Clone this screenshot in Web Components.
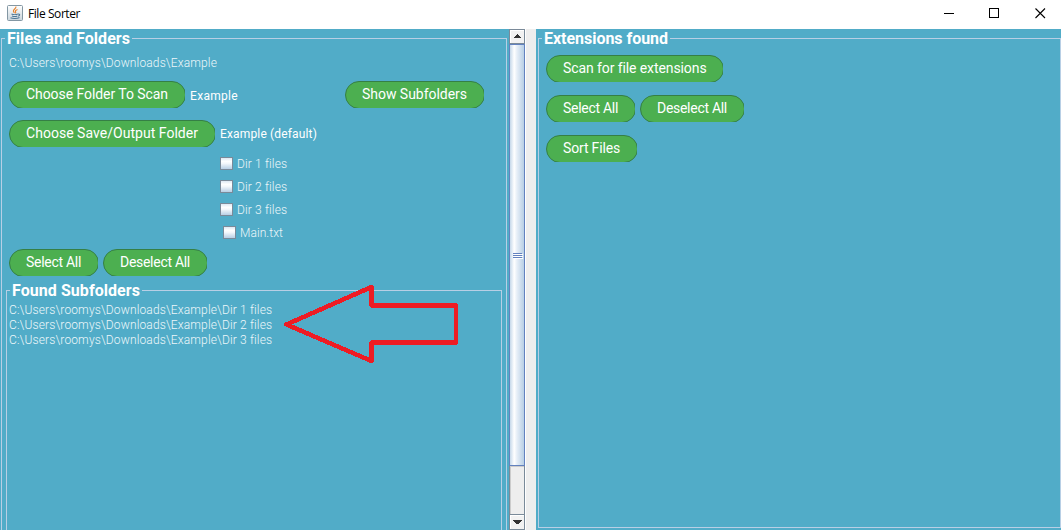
<!DOCTYPE html>
<html lang="en"><head><meta charset="utf-8"><title>File Sorter</title>
<style>html,body{margin:0;height:530px;overflow:hidden;background:#eee;font-family:Roboto,"Liberation Sans",sans-serif}</style></head>
<body><sorter-window></sorter-window>
<script>
function define(name, html, ready) {
  const t = document.createElement('template');
  t.innerHTML = html;
  customElements.define(name, class extends HTMLElement {
    constructor() { super(); this.attachShadow({mode: 'open'}).append(t.content.cloneNode(true)); }
    connectedCallback() { if (ready) ready(this); }
  });
}

/* Text tracked out or in to a fixed advance width */
define('fit-text', `<style>:host{display:inline-block;white-space:pre}span{display:inline-block}</style><span><slot></slot></span>`, el => {
  const w = +el.getAttribute('w'), s = el.shadowRoot.querySelector('span');
  requestAnimationFrame(() => {
    const now = s.getBoundingClientRect().width;
    s.style.letterSpacing = (w - now) / el.textContent.length + 'px';
    el.style.width = w + 'px';
  });
});

define('pill-button', `<style>
:host{display:block;height:27px;overflow:hidden;flex:none;color:#fff;font-size:14px;line-height:24px}
div{box-sizing:border-box;height:28px;margin-right:-1px;padding:0 17px 0 16px;border:1px solid #357f45;border-radius:14px;background:#4caf50}
</style><div><slot></slot></div>`);

define('check-item', `<style>
:host{display:flex;align-items:center;height:23px;color:#edf7fa;font-size:12px;font-weight:300}
i{box-sizing:border-box;width:13px;height:13px;margin-right:4px;border:1px solid #7a8a99;background:linear-gradient(#dde8f3 0,#fff 30%,#f3f7fb 50%,#b8cfe5)}
</style><i></i><slot></slot>`);

define('titled-panel', `<style>
:host{display:flex;flex-direction:column;box-sizing:border-box}
header{display:flex;height:18px;flex:none;color:#fff;font-size:16px;font-weight:700;line-height:20px}
.l,.r{box-sizing:border-box;margin-top:9px;border-top:1px solid #b8cfe5}
.l{width:4px;margin-right:2px;border-left:1px solid #b8cfe5}
.r{flex:1;margin-left:2px;border-right:1px solid #b8cfe5}
main{flex:1;box-sizing:border-box;border:solid #b8cfe5;border-width:0 1px 1px;min-height:0}
</style><header><span class="l"></span><slot name="title"></slot><span class="r"></span></header><main><slot></slot></main>`);

define('metal-scrollbar', `<style>
:host{display:flex;flex-direction:column;box-sizing:border-box;width:17px;height:501px;border:solid;border-width:0 1px 0 1px;border-color:#7a8a99 #fff;border-left-color:#7a8a99;background:#eee}
.b{box-sizing:border-box;height:15px;width:15px;border:1px solid #7a8a99;border-left:0;display:flex;align-items:center;justify-content:center;background:#f2f2f2;flex:none;box-shadow:inset 1px 1px #fff}
.d{height:16px}
.t{box-sizing:border-box;width:16px;height:422px;margin-left:-1px;border:1px solid #6382bf;background:linear-gradient(90deg,#c5d8ea 0,#fff 30%,#e6eef7 50%,#b8cfe5);display:flex;align-items:center;justify-content:center;flex:none}
.k{flex:1;box-sizing:border-box;width:15px;border-right:1px solid #7a8a99;box-shadow:inset 1px 1px #ccc}
svg{display:block}.t svg{margin:2px 0 0 2px}
</style><div class="b"><svg width="9" height="5" shape-rendering="crispEdges"><path d="M4 0h1v1h1v1h1v1h1v1H1V3h1V2h1V1h1z" fill="#333"/></svg></div>
<div class="t"><svg width="10" height="7" shape-rendering="crispEdges"><path d="M1 1.5h9M1 3.5h9M1 5.5h9" stroke="#fff"/><path d="M0 .5h9M0 2.5h9M0 4.5h9" stroke="#6382bf"/></svg></div>
<div class="k"></div><div class="b d"><svg width="9" height="5" shape-rendering="crispEdges"><path d="M0 0h9v1H8v1H7v1H6v1H3V3H2V2H1V1H0z" fill="#333"/></svg></div>`);

define('title-bar', `<style>
:host{display:flex;height:29px;box-sizing:border-box;background:#fff;color:#000;font:12px/28px "Open Sans","Noto Sans",sans-serif}
.i{margin:5px 5px 0 7px;flex:none}.c{margin:8px 15px 0 auto;flex:none}
</style>
<svg class="i" width="16" height="16" viewBox="0 0 16 16"><defs><linearGradient id="g" x2="0" y2="1"><stop stop-color="#fff"/><stop offset="1" stop-color="#c9d5dc"/></linearGradient></defs><rect x=".5" y=".5" width="15" height="15" rx="1" fill="url(#g)" stroke="#8397a3"/>
<path d="M8.8 1.5c1.2 2-3 2.800-2.400 4.600.2.700 1 1.200.8 2M10.500 4.400C8.600 5.100 8 6 8.700 7c.3.500-.1.900-.5 1.200" fill="none" stroke="#e5812c" stroke-width="1.100"/>
<path d="M4.500 9c1.500.7 5 .6 6.300 0M5 10.900c1.500.6 4.200.6 5.300 0M3.500 12.700c2.200 1.100 6.800 1 9-.2M11 9.200c2.300-.7 2.100 1.500.1 2" fill="none" stroke="#4e7896" stroke-width="1.100"/></svg>
<fit-text w="52">File Sorter</fit-text>
<svg class="c" width="102" height="11" fill="none" stroke="#000"><path d="M0 5.500h10M45.500.5h9v9h-9z" shape-rendering="crispEdges"/><path d="M91.500.5l9.500 9.500M101 .5l-9.500 9.500" stroke-width="1.100"/></svg>`);

define('red-arrow', `<style>:host{position:absolute;left:280px;top:280px;width:182px;height:88px}svg{display:block}</style>
<svg width="182" height="88"><path d="M6.500 44.500 91.500 7v18.500h84.500v37H91.500V81z" fill="none" stroke="#ed1c24" stroke-width="4.500" stroke-linejoin="round" shape-rendering="crispEdges"/></svg>`);

define('sorter-window', `<style>
:host{display:block;position:relative;width:1061px;height:530px;overflow:hidden}
.body{display:flex;height:501px}
.left,.right{background:#51acc8;box-sizing:border-box;overflow:hidden;flex:none}
.left{width:509px;padding-left:1px}.right{width:525px;margin-left:10px;padding-left:2px}
.outer{width:506px;height:520px}.right titled-panel{width:523px;height:499px}
.row{display:flex;margin-left:7px;gap:5px}
.p{display:block;color:#edf7fa;font-size:12px;font-weight:300;line-height:15px}
.n{color:#fff;font-size:12px;line-height:15px;margin-top:8px}
.checks{margin:5px 0 0 218px}
.sub{width:496px;height:270px;margin:5px 0 0 4px}
</style>
<title-bar></title-bar>
<div class="body">
 <div class="left"><titled-panel class="outer"><fit-text slot="title" w="123">Files and Folders</fit-text>
  <fit-text class="p" w="208" style="margin:9px 0 0 7px">C:\\Users\\roomys\\Downloads\\Example</fit-text>
  <div class="row" style="margin-top:10px"><pill-button><fit-text w="142">Choose Folder To Scan</fit-text></pill-button><fit-text class="n" w="48">Example</fit-text><pill-button style="margin-left:102px"><fit-text w="105">Show Subfolders</fit-text></pill-button></div>
  <div class="row" style="margin-top:12px"><pill-button><fit-text w="172">Choose Save/Output Folder</fit-text></pill-button><fit-text class="n" w="97" style="margin-top:7px">Example (default)</fit-text></div>
  <div class="checks"><check-item><fit-text w="50">Dir 1 files</fit-text></check-item><check-item><fit-text w="50">Dir 2 files</fit-text></check-item><check-item><fit-text w="50">Dir 3 files</fit-text></check-item><check-item style="margin-left:3px"><fit-text w="43">Main.txt</fit-text></check-item></div>
  <div class="row" style="margin-top:5px"><pill-button><fit-text w="55">Select All</fit-text></pill-button><pill-button><fit-text w="70">Deselect All</fit-text></pill-button></div>
  <titled-panel class="sub"><fit-text slot="title" w="128">Found Subfolders</fit-text>
   <div style="margin:4px 0 0 2px"><fit-text class="p" w="263">C:\\Users\\roomys\\Downloads\\Example\\Dir 1 files</fit-text><fit-text class="p" w="263">C:\\Users\\roomys\\Downloads\\Example\\Dir 2 files</fit-text><fit-text class="p" w="263">C:\\Users\\roomys\\Downloads\\Example\\Dir 3 files</fit-text></div>
  </titled-panel>
 </titled-panel></div>
 <metal-scrollbar></metal-scrollbar>
 <div class="right"><titled-panel><fit-text slot="title" w="124">Extensions found</fit-text>
  <div class="row" style="margin-top:8px"><pill-button><fit-text w="143">Scan for file extensions</fit-text></pill-button></div>
  <div class="row" style="margin-top:13px"><pill-button><fit-text w="55">Select All</fit-text></pill-button><pill-button><fit-text w="70">Deselect All</fit-text></pill-button></div>
  <div class="row" style="margin-top:13px"><pill-button><fit-text w="57">Sort Files</fit-text></pill-button></div>
 </titled-panel></div>
</div><red-arrow></red-arrow>`);
</script></body></html>
